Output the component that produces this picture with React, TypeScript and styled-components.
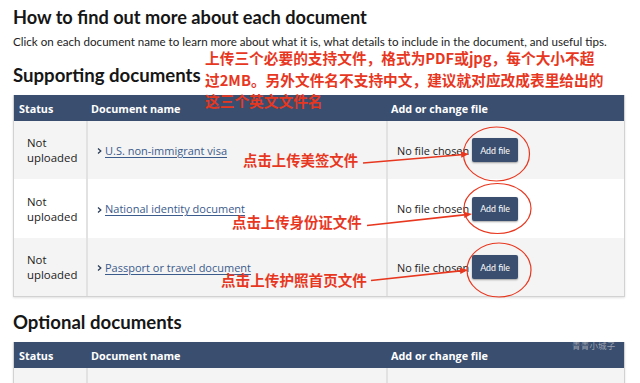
import React, { FC } from 'react';
import styled, { createGlobalStyle } from 'styled-components';

const GlobalStyle = createGlobalStyle`
	html, body {
		margin: 0;
		padding: 0;
		background: #ffffff;
	}
	body {
		font-family: 'Open Sans', 'Noto Sans', sans-serif;
		color: #1f1f1f;
		overflow: hidden;
	}
`;

const NAVY = '#3a4e6f';
const RED = '#e8371f';

const Page = styled.div`
	position: relative;
	width: 640px;
	height: 383px;
	overflow: hidden;
	padding: 4px 15px 0 13px;
	box-sizing: border-box;
`;

const Title = styled.h1`
	margin: 0;
	font-family: Lato, 'Open Sans', sans-serif;
	font-weight: 700;
	font-size: 18.2px;
	line-height: 26px;
	color: #161616;
`;

const Intro = styled.p`
	margin: 4px 0 0;
	font-family: Lato, 'Open Sans', sans-serif;
	font-size: 11.6px;
	line-height: 16px;
	color: #222;
	white-space: nowrap;
`;

const SectionTitle = styled.h2<{ $top: number }>`
	margin: ${(p) => p.$top}px 0 0;
	font-family: Lato, 'Open Sans', sans-serif;
	font-weight: 700;
	font-size: 18.6px;
	line-height: 26px;
	color: #161616;
`;

const Table = styled.div<{ $top: number }>`
	margin-top: ${(p) => p.$top}px;
	width: 612px;
	border: 1px solid #d2d2d2;
	border-top: none;
	box-sizing: border-box;
	box-shadow: 0 1px 2px rgba(0, 0, 0, 0.12);
`;

const Row = styled.div<{ $header?: boolean; $shade?: boolean; $height: number }>`
	display: grid;
	grid-template-columns: 72px 300px 1fr;
	height: ${(p) => p.$height}px;
	background: ${(p) => (p.$header ? NAVY : p.$shade ? '#f4f4f4' : '#ffffff')};
	color: ${(p) => (p.$header ? '#ffffff' : '#222')};
`;

const Cell = styled.div<{ $header?: boolean; $pad: number; $divider?: boolean }>`
	display: flex;
	align-items: center;
	padding-left: ${(p) => p.$pad}px;
	box-sizing: border-box;
	border-left: ${(p) => (p.$divider && !p.$header ? '2px solid #e2e2e2' : 'none')};
	font-size: ${(p) => (p.$header ? '10.8px' : '11.4px')};
	font-weight: ${(p) => (p.$header ? 700 : 400)};
	line-height: 15px;
	min-width: 0;
`;

const Status = styled.span`
	width: 52px;
`;

const DocLink = styled.a`
	display: flex;
	align-items: center;
	gap: 3px;
	color: #3b5b8c;
	font-size: 11px;
	cursor: pointer;

	span {
		text-decoration: underline;
		text-underline-offset: 2px;
	}
`;

const Chevron = styled.svg`
	width: 5px;
	height: 8px;
	flex: none;
	margin-top: 2px;
`;

const FilePicker = styled.div`
	display: flex;
	align-items: center;
	gap: 3px;
	font-size: 10.9px;
	color: #222;
`;

const AddButton = styled.button`
	width: 46px;
	height: 24px;
	border: none;
	border-radius: 2px;
	background: ${NAVY};
	color: #ffffff;
	font-family: Lato, 'Open Sans', sans-serif;
	font-size: 8.8px;
	padding: 0;
	box-shadow: 0 1px 2px rgba(0, 0, 0, 0.35);
	cursor: pointer;
`;

const Watermark = styled.span`
	position: absolute;
	left: 572px;
	top: 339px;
	font-family: 'Noto Sans CJK SC', sans-serif;
	font-size: 8.5px;
	color: rgba(190, 190, 195, 0.75);
	letter-spacing: 0.2px;
`;

const Overlay = styled.svg`
	position: absolute;
	left: 0;
	top: 0;
	width: 640px;
	height: 383px;
	pointer-events: none;
`;

const Note = styled.div<{ $x: number; $y: number; $size: number; $lh?: number }>`
	position: absolute;
	left: ${(p) => p.$x}px;
	top: ${(p) => p.$y}px;
	font-family: 'Noto Sans CJK SC', 'Noto Sans', sans-serif;
	font-weight: 700;
	font-size: ${(p) => p.$size}px;
	line-height: ${(p) => p.$lh ?? 20}px;
	color: ${RED};
	white-space: nowrap;
	pointer-events: none;
`;

type Doc = { name: string };

const requiredDocs: Doc[] = [
	{ name: 'U.S. non-immigrant visa' },
	{ name: 'National identity document' },
	{ name: 'Passport or travel document' },
];

const rowHeights = [58, 59, 58];

const HeaderRow: FC = () => (
	<Row $header $height={26}>
		<Cell $header $pad={5}>Status</Cell>
		<Cell $header $pad={5}>Document name</Cell>
		<Cell $header $pad={5}>Add or change file</Cell>
	</Row>
);

const DocRow: FC<{ doc?: Doc; shade: boolean; height: number }> = ({ doc, shade, height }) => (
	<Row $shade={shade} $height={height}>
		<Cell $pad={13}>{doc && <Status>Not uploaded</Status>}</Cell>
		<Cell $pad={9} $divider>
			{doc && (
				<DocLink>
					<Chevron viewBox="0 0 5 8">
						<path d="M1 1.5 L3.8 4 L1 6.5" fill="none" stroke="#2d3f5c" strokeWidth="1.3" />
					</Chevron>
					<span>{doc.name}</span>
				</DocLink>
			)}
		</Cell>
		<Cell $pad={9} $divider>
			{doc && (
				<FilePicker>
					No file chosen
					<AddButton type="button">Add file</AddButton>
				</FilePicker>
			)}
		</Cell>
	</Row>
);

const Arrow: FC<{ x1: number; y1: number; x2: number; y2: number }> = ({ x1, y1, x2, y2 }) => {
	const a = Math.atan2(y2 - y1, x2 - x1);
	const l = 8;
	const w = 3.2;
	const bx = x2 - l * Math.cos(a);
	const by = y2 - l * Math.sin(a);
	const px = -Math.sin(a) * w;
	const py = Math.cos(a) * w;
	return (
		<g>
			<line x1={x1} y1={y1} x2={bx} y2={by} stroke={RED} strokeWidth="1.6" />
			<polygon points={`${x2},${y2} ${bx + px},${by + py} ${bx - px},${by - py}`} fill={RED} />
		</g>
	);
};

export default function App() {
	return (
		<>
			<GlobalStyle />
			<Page>
				<Title>How to find out more about each document</Title>
				<Intro>
					Click on each document name to learn more about what it is, what details to include in the document, and useful tips.
				</Intro>
				<SectionTitle $top={12}>Supporting documents</SectionTitle>
				<Table $top={7}>
					<HeaderRow />
					{requiredDocs.map((doc, i) => (
						<DocRow key={doc.name} doc={doc} shade={i % 2 === 0} height={rowHeights[i]} />
					))}
				</Table>
				<SectionTitle $top={12}>Optional documents</SectionTitle>
				<Table $top={7}>
					<HeaderRow />
					<DocRow shade height={40} />
				</Table>

				<Watermark>青青小城子</Watermark>

				<Overlay viewBox="0 0 640 383">
					<ellipse cx="496.5" cy="154" rx="33" ry="27" fill="none" stroke={RED} strokeWidth="1.2" />
					<ellipse cx="497.5" cy="208.5" rx="33.5" ry="25" fill="none" stroke={RED} strokeWidth="1.2" />
					<ellipse cx="499" cy="270" rx="32" ry="27" fill="none" stroke={RED} strokeWidth="1.2" />
					<Arrow x1={363} y1={163} x2={469} y2={154} />
					<Arrow x1={367} y1={225.5} x2={472} y2={214} />
					<Arrow x1={371} y1={280.5} x2={468} y2={270} />
				</Overlay>

				<Note $x={205} $y={47} $size={14.7} $lh={21.5}>
					上传三个必要的支持文件，格式为PDF或jpg，每个大小不超
					<br />
					过2MB。另外文件名不支持中文，建议就对应改成表里给出的
					<br />
					这三个英文文件名
				</Note>
				<Note $x={243} $y={150} $size={14.4}>点击上传美签文件</Note>
				<Note $x={232} $y={212} $size={14.4}>点击上传身份证文件</Note>
				<Note $x={221} $y={270} $size={14.6}>点击上传护照首页文件</Note>
			</Page>
		</>
	);
}
